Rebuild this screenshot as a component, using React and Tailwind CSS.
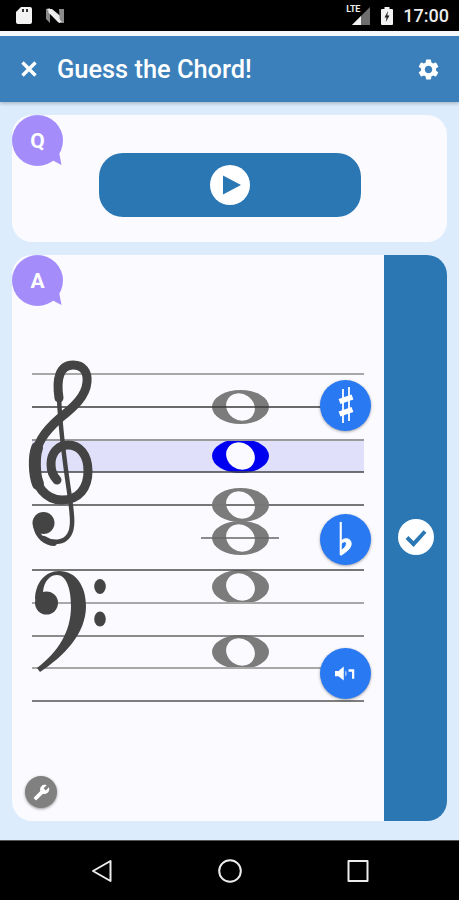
import { MdSettings, MdBuild } from 'react-icons/md';

const LINES = [
  [374, '#a8a8a8', 2], [407, '#3a3a3a', 1.4], [440, '#9a9a9a', 2], [472, '#444444', 1.4], [505, '#777777', 1.8],
  [570, '#4a4a4a', 1.6], [603, '#a8a8a8', 2], [636, '#666666', 1.6], [668, '#a8a8a8', 2], [701, '#555555', 1.6],
];
const GRAY_NOTES = [407, 505, 538, 587, 652];

function Note({ y, color }) {
  return (
    <g>
      <ellipse cx="240.5" cy={y} rx="28.5" ry="17" fill={color} />
      <ellipse cx="240.5" cy={y} rx="15" ry="13" fill="#fafaff" transform={`rotate(35 240.5 ${y})`} />
    </g>
  );
}

function Staff() {
  return (
    <svg viewBox="12 355 372 360" className="block w-[372px] h-[360px]">
      <rect x="32" y="440" width="332" height="32" fill="#e0e0fb" />
      {GRAY_NOTES.map(y => <Note key={y} y={y} color="#7b7b7b" />)}
      <Note y={456} color="#0000f0" />
      {LINES.map(([y, c, w]) => <line key={y} x1="32" x2="364" y1={y} y2={y} stroke={c} strokeWidth={w} />)}
      <line x1="201" x2="279" y1="538" y2="538" stroke="#666666" strokeWidth="1.6" />

      {/* treble clef */}
      <g fill="none" stroke="#444444" strokeLinecap="round" strokeLinejoin="round">
        <path strokeWidth="9" d="M59 398C56 378 60 365 73 365C83 365 88 372 87 382C86 396 74 407 60 418C45 431 34 445 34 466C34 486 46 500 62 500C79 500 88 488 88 471C88 454 79 445 68 445C58 445 51 453 51 464C51 471 53 476 57 480" />
        <path strokeWidth="12" d="M37 448C34 456 34 474 38 484" />
        <path strokeWidth="4.5" d="M59 398C60 420 65 465 70 498C72 515 74 527 69 535C64 543 53 544 44 538" />
      </g>
      <circle cx="43.5" cy="523" r="11" fill="#444444" />
      <path d="M33 526C35 538 44 546 55 546L60 541C50 542 42 538 39 530Z" fill="#444444" />

      {/* bass clef */}
      <circle cx="46.5" cy="603" r="11.5" fill="#444444" />
      <path fill="#444444" d="M35 600C35 582 46 571 59 571C76 571 86 586 86 606C86 634 64 656 40 672L37 668C58 652 71 632 71 606C71 588 66 575 57 575C50 575 44 581 43 592Z" />
      <ellipse cx="100" cy="586.5" rx="5.8" ry="7.5" fill="#444444" />
      <ellipse cx="100" cy="619" rx="5.8" ry="7.5" fill="#444444" />
    </svg>
  );
}

function Avatar({ letter }) {
  return (
    <div className="absolute top-0 left-0 w-[51px] h-[51px]">
      <svg viewBox="0 0 51 51" className="absolute inset-0 w-[51px] h-[51px]">
        <circle cx="25.5" cy="25.5" r="25.5" fill="#a48dfa" />
        <path d="M38 44L47 37L49.5 50Z" fill="#a48dfa" />
      </svg>
      <div className="relative h-full pt-[2px] flex items-center justify-center text-white text-[21px] font-bold">{letter}</div>
    </div>
  );
}

function Fab({ children }) {
  return (
    <div className="w-[51px] h-[51px] rounded-full bg-[#2979f3] flex items-center justify-center shadow-[0_1px_3px_rgba(0,0,0,0.35)]">
      {children}
    </div>
  );
}

function StatusBar() {
  return (
    <div className="h-[31px] bg-black flex items-center pl-[16px] pr-[10px] text-[#ececec]">
      <svg viewBox="0 0 16 17" className="w-[16px] h-[17px]">
        <path d="M5 0H14A2 2 0 0 1 16 2V15A2 2 0 0 1 14 17H2A2 2 0 0 1 0 15V5Z" fill="#f2f2f2" />
        <rect x="6" y="2" width="2" height="3" fill="#333" />
        <rect x="10" y="2" width="2" height="3" fill="#333" />
      </svg>
      <svg viewBox="0 0 20 16" className="w-[20px] h-[16px] ml-[13px]">
        <path d="M1 1L5 0L5 15L1 11Z" fill="#8a8a8a" />
        <path d="M2 1H7L19 11L18 15H14Z" fill="#e8e8e8" />
        <path d="M14 1H19V15H15Z" fill="#8a8a8a" />
        <path d="M5 2L17 14H13L3 4Z" fill="#eeeeee" />
      </svg>
      <div className="flex-1" />
      <div className="relative w-[24px] h-[20px] top-[1px]">
        <svg viewBox="0 0 24 20" className="absolute inset-0 w-[24px] h-[20px]">
          <path d="M24 0V18H6Z" fill="#6e6e6e" />
          <path d="M15 9V18H6Z" fill="#f2f2f2" />
        </svg>
        <div className="absolute -top-[3px] left-0 text-[9px] leading-[10px] font-bold tracking-[-0.3px]">LTE</div>
      </div>
      <svg viewBox="0 0 12 18" className="w-[12px] h-[18px] ml-[11px]">
        <path d="M3.5 0H8.5V2H11A1 1 0 0 1 12 3V17A1 1 0 0 1 11 18H1A1 1 0 0 1 0 17V3A1 1 0 0 1 1 2H3.5Z" fill="#f2f2f2" />
        <path d="M7 4L3.5 10.5H5.5L4.8 15L8.5 8.5H6.3Z" fill="#222" />
      </svg>
      <div className="ml-[10px] text-[18px] leading-none font-medium">17:00</div>
    </div>
  );
}

function Header() {
  return (
    <div className="h-[66px] bg-[#3b80ba] flex items-center pl-[21px] pr-[18px] text-white shadow-[0_2px_3px_rgba(0,0,0,0.2)] relative">
      <svg viewBox="0 0 16 16" className="w-[16px] h-[16px]">
        <path d="M1.5 1.5L14.5 14.5M14.5 1.5L1.5 14.5" stroke="white" strokeWidth="3.4" />
      </svg>
      <div className="ml-[20px] flex-1 text-[25.4px] font-medium">Guess the Chord!</div>
      <MdSettings className="w-[25px] h-[25px]" />
    </div>
  );
}

function NavBar() {
  return (
    <div className="h-[60px] bg-black flex items-center justify-center gap-[104px] border-t border-[#555]">
      <svg viewBox="0 0 24 24" className="w-[24px] h-[24px]" fill="none" stroke="#ececec" strokeWidth="2" strokeLinejoin="round">
        <path d="M20.5 2V22L3 12Z" />
      </svg>
      <svg viewBox="0 0 24 24" className="w-[24px] h-[24px]" fill="none" stroke="#ececec" strokeWidth="2">
        <circle cx="12" cy="12" r="10.8" />
      </svg>
      <svg viewBox="0 0 24 24" className="w-[24px] h-[24px]" fill="none" stroke="#ececec" strokeWidth="2" strokeLinejoin="round">
        <rect x="2.5" y="2" width="19" height="20" />
      </svg>
    </div>
  );
}

export default function App() {
  return (
    <div className="w-[459px] h-[900px] flex flex-col bg-[#dcecfd] font-[Roboto,sans-serif] overflow-hidden">
      <StatusBar />
      <div className="h-[5px] bg-[#f4f8fc]" />
      <Header />

      <div className="flex-1 flex flex-col gap-[13px] pt-[13px] pb-[19px] pl-[12px] pr-[12px]">
        <div className="relative h-[127px] rounded-[20px] bg-[#fafaff] flex justify-center pt-[38px]">
          <Avatar letter="Q" />
          <div className="w-[262px] h-[64px] rounded-[24px] bg-[#2a77b3] flex items-center justify-center">
            <svg viewBox="0 0 40 40" className="w-[40px] h-[40px]">
              <circle cx="20" cy="20" r="20" fill="white" />
              <path d="M13 10.5L31 20L13 29.5Z" fill="#2a77b3" />
            </svg>
          </div>
        </div>

        <div className="relative flex-1 rounded-[20px] bg-[#fafaff] flex overflow-hidden">
          <Avatar letter="A" />
          <div className="w-[372px] flex flex-col justify-between">
            <div className="relative mt-[100px]">
              <Staff />
              <div className="absolute top-[25px] left-[308px] flex flex-col gap-[83px]">
                <Fab>
                  <svg viewBox="0 0 20 40" className="w-[20px] h-[40px]" stroke="white" fill="none">
                    <path strokeWidth="1.8" d="M7 3V37M13 1V35" />
                    <path strokeWidth="5.5" d="M3.5 15.5L16.5 11M3.5 28L16.5 23.5" />
                  </svg>
                </Fab>
                <Fab>
                  <svg viewBox="0 0 20 40" className="w-[19px] h-[38px]" fill="none" stroke="white">
                    <path strokeWidth="2.2" d="M5 1V36" />
                    <path fill="white" strokeWidth="1" d="M5.5 21C9 17 16 18 16 24C16 29 10 33 5.5 36V31C8 29 11 27 11 24C11 21 8 21 5.5 24Z" />
                  </svg>
                </Fab>
                <Fab>
                  <svg viewBox="0 0 24 16" className="w-[21px] h-[15px]" fill="white">
                    <path d="M0 5H4L10 0V16L4 11H0Z" />
                    <path d="M12 4.5C13.5 6 13.5 10 12 11.5Z" />
                    <path d="M15.5 3H22V14H19.5V6H15.5Z" />
                  </svg>
                </Fab>
              </div>
            </div>
            <div className="ml-[13px] mb-[13px] w-[32px] h-[32px] rounded-full bg-[#808080] flex items-center justify-center text-white shadow-[0_1px_3px_rgba(0,0,0,0.4)]">
              <MdBuild className="w-[17px] h-[17px] -scale-x-100" />
            </div>
          </div>
          <div className="w-[63px] bg-[#2a77b3] flex items-center justify-center pb-[3px]">
            <svg viewBox="0 0 36 36" className="w-[36px] h-[36px]">
              <circle cx="18" cy="18" r="18" fill="white" />
              <path d="M9 18.5L15.5 25L27 12.5" fill="none" stroke="#2a77b3" strokeWidth="4" />
            </svg>
          </div>
        </div>
      </div>

      <NavBar />
    </div>
  );
}
